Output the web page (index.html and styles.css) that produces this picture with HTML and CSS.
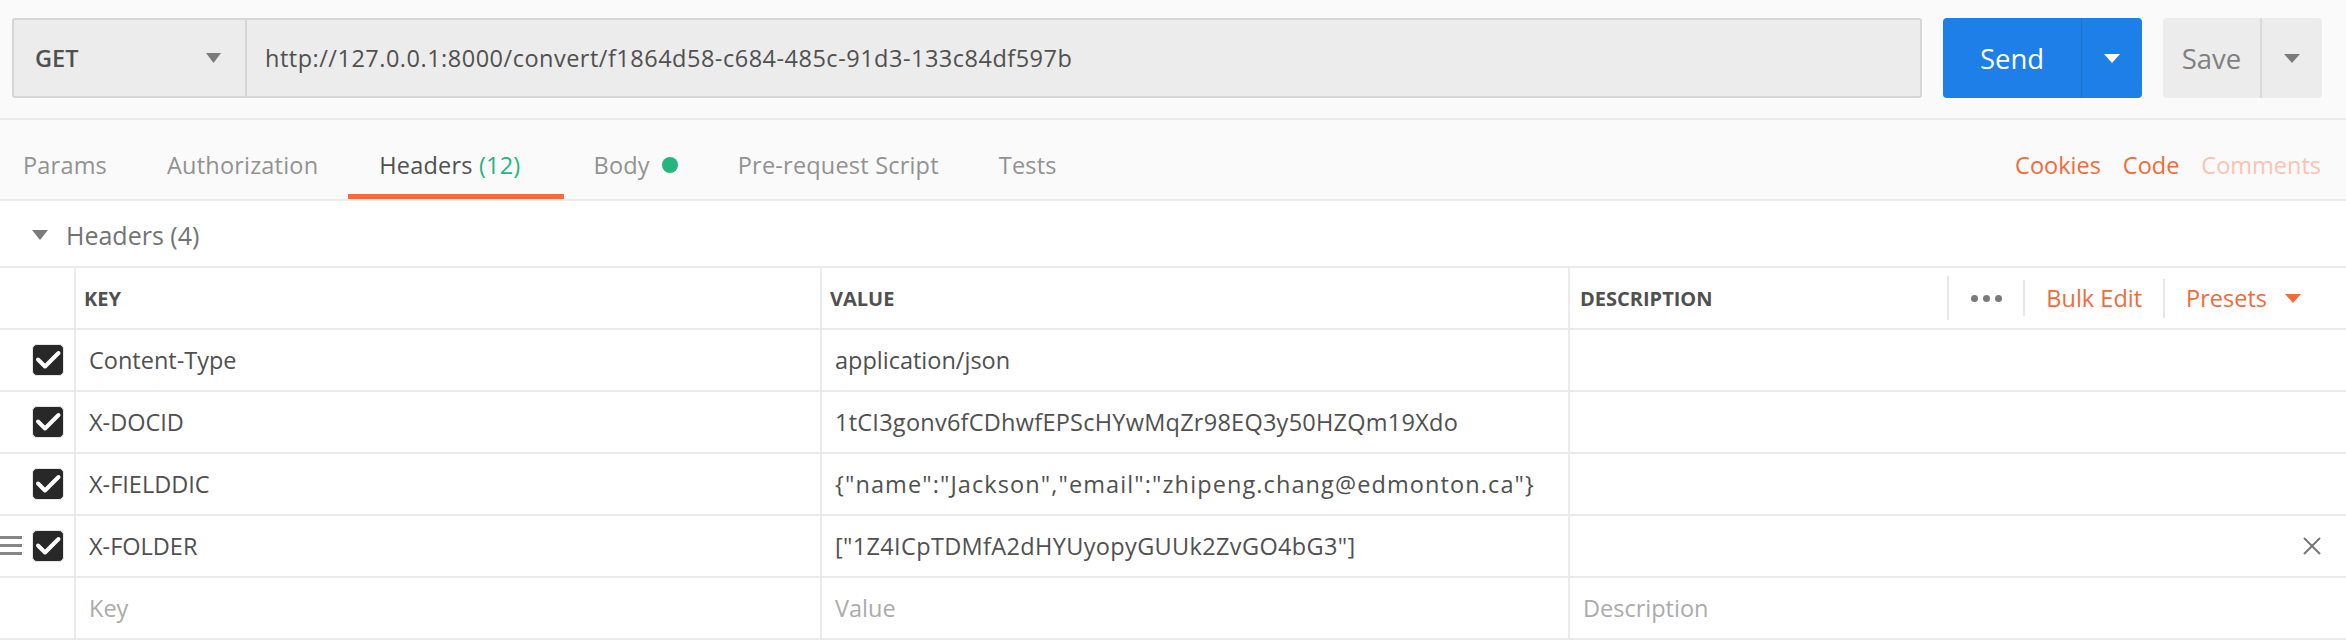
FILE: index.html
```html
<!DOCTYPE html>
<html>
<head>
<meta charset="utf-8">
<link rel="stylesheet" href="styles.css">
</head>
<body>
<div class="app">
  <div class="topbar">
    <div class="urlbox">
      <div class="method">
        <span class="method-label">GET</span>
        <svg class="caret" width="15" height="10" viewBox="0 0 15 10"><path d="M0 0H15L7.5 10Z" fill="#7b7b7b"/></svg>
      </div>
      <div class="url">http://127.0.0.1:8000/convert/f1864d58-c684-485c-91d3-133c84df597b</div>
    </div>
    <div class="send">
      <div class="send-main">Send</div>
      <div class="send-drop"><svg width="16" height="9" viewBox="0 0 16 9"><path d="M0 0H16L8 9Z" fill="#ffffff"/></svg></div>
    </div>
    <div class="save">
      <div class="save-main">Save</div>
      <div class="save-drop"><svg width="16" height="9" viewBox="0 0 16 9"><path d="M0 0H16L8 9Z" fill="#7b7b7b"/></svg></div>
    </div>
  </div>

  <div class="tabs">
    <div class="tab">Params</div>
    <div class="tab">Authorization</div>
    <div class="tab active">Headers&nbsp;<span class="count">(12)</span></div>
    <div class="tab">Body<span class="dot"></span></div>
    <div class="tab">Pre-request Script</div>
    <div class="tab">Tests</div>
    <div class="tab-actions">
      <span class="link">Cookies</span>
      <span class="link">Code</span>
      <span class="link faded">Comments</span>
    </div>
  </div>

  <div class="section-title">
    <svg class="collapse" width="16" height="10" viewBox="0 0 16 10"><path d="M0 0H16L8 10Z" fill="#7b7b7b"/></svg>
    <span>Headers (4)</span>
  </div>

  <div class="table">
    <div class="row head">
      <div class="cell"></div>
      <div class="cell">KEY</div>
      <div class="cell">VALUE</div>
      <div class="cell desc-head">
        <span>DESCRIPTION</span>
        <div class="tools">
          <span class="vsep tall"></span>
          <span class="dots"><i></i><i></i><i></i></span>
          <span class="vsep"></span>
          <span class="link">Bulk Edit</span>
          <span class="vsep mid"></span>
          <span class="link presets"><span>Presets</span><svg width="16" height="9" viewBox="0 0 16 9"><path d="M0 0H16L8 9Z" fill="#f26b3a"/></svg></span>
        </div>
      </div>
    </div>

    <div class="row">
      <div class="cell check-cell"><span class="checkbox"><svg width="30" height="30" viewBox="0 0 30 30"><path d="M5 14.5L12 21.5L25.5 8" fill="none" stroke="#fff" stroke-width="4" stroke-linecap="round" stroke-linejoin="round"/></svg></span></div>
      <div class="cell text">Content-Type</div>
      <div class="cell text">application/json</div>
      <div class="cell"></div>
    </div>

    <div class="row">
      <div class="cell check-cell"><span class="checkbox"><svg width="30" height="30" viewBox="0 0 30 30"><path d="M5 14.5L12 21.5L25.5 8" fill="none" stroke="#fff" stroke-width="4" stroke-linecap="round" stroke-linejoin="round"/></svg></span></div>
      <div class="cell text">X-DOCID</div>
      <div class="cell text value">1tCI3gonv6fCDhwfEPScHYwMqZr98EQ3y50HZQm19Xdo</div>
      <div class="cell"></div>
    </div>

    <div class="row">
      <div class="cell check-cell"><span class="checkbox"><svg width="30" height="30" viewBox="0 0 30 30"><path d="M5 14.5L12 21.5L25.5 8" fill="none" stroke="#fff" stroke-width="4" stroke-linecap="round" stroke-linejoin="round"/></svg></span></div>
      <div class="cell text">X-FIELDDIC</div>
      <div class="cell text value wide">{"name":"Jackson","email":"zhipeng.chang@edmonton.ca"}</div>
      <div class="cell"></div>
    </div>

    <div class="row">
      <div class="cell check-cell">
        <svg class="handle" width="22" height="19" viewBox="0 0 22 19"><rect x="0" y="0" width="22" height="3" fill="#868686"/><rect x="0" y="8" width="22" height="3" fill="#868686"/><rect x="0" y="16" width="22" height="3" fill="#868686"/></svg>
        <span class="checkbox"><svg width="30" height="30" viewBox="0 0 30 30"><path d="M5 14.5L12 21.5L25.5 8" fill="none" stroke="#fff" stroke-width="4" stroke-linecap="round" stroke-linejoin="round"/></svg></span>
      </div>
      <div class="cell text">X-FOLDER</div>
      <div class="cell text value mid">["1Z4ICpTDMfA2dHYUyopyGUUk2ZvGO4bG3"]</div>
      <div class="cell close-cell"><svg width="18" height="18" viewBox="0 0 18 18"><path d="M1 1L17 17M17 1L1 17" stroke="#777" stroke-width="2"/></svg></div>
    </div>

    <div class="row">
      <div class="cell"></div>
      <div class="cell text placeholder">Key</div>
      <div class="cell text placeholder">Value</div>
      <div class="cell text placeholder">Description</div>
    </div>
  </div>
</div>
</body>
</html>
```

FILE: styles.css
```css
* { box-sizing: border-box; }

body {
  margin: 0;
  width: 2346px;
  background: #ffffff;
  font-family: "Open Sans", "Liberation Sans", sans-serif;
  font-size: 23.5px;
  color: #505050;
}

/* ---------- top bar ---------- */
.topbar {
  display: flex;
  align-items: flex-start;
  gap: 21px;
  height: 120px;
  padding: 18px 24px 0 12px;
  background: #fafafa;
  border-bottom: 2px solid #ebebeb;
}

.urlbox {
  flex: 1;
  display: flex;
  height: 80px;
  background: #ececec;
  border: 2px solid #d6d6d6;
  border-radius: 3px;
}

.method {
  width: 233px;
  display: flex;
  align-items: center;
  justify-content: space-between;
  padding: 0 24px 0 21px;
  border-right: 2px solid #d6d6d6;
  font-weight: 600;
  color: #505050;
}

.url {
  display: flex;
  align-items: center;
  padding-left: 18px;
  letter-spacing: 0.5px;
  color: #505050;
}

.send {
  width: 199px;
  height: 80px;
  display: flex;
  background: #1e7fe9;
  border-radius: 4px;
  color: #ffffff;
  font-size: 27.5px;
}

.send-main {
  width: 139px;
  display: flex;
  align-items: center;
  justify-content: center;
  border-right: 1px solid #1a6fcf;
}

.send-drop, .save-drop {
  flex: 1;
  display: flex;
  align-items: center;
  justify-content: center;
}

.save {
  width: 159px;
  height: 80px;
  display: flex;
  background: #ececec;
  border-radius: 4px;
  color: #808080;
  font-size: 27.5px;
}

.save-main {
  width: 99px;
  display: flex;
  align-items: center;
  justify-content: center;
  border-right: 2px solid #dadada;
}

/* ---------- tabs ---------- */
.tabs {
  display: flex;
  height: 81px;
  padding: 0 25px 0 23px;
  background: #fafafa;
  border-bottom: 2px solid #ebebeb;
}

.tab {
  display: flex;
  align-items: center;
  padding: 16px 30px 0;
  border-bottom: 5px solid transparent;
  color: #929292;
  letter-spacing: 0.2px;
  white-space: nowrap;
}

.tab:first-child { padding-left: 0; }

.tab.active {
  padding-left: 31px;
  padding-right: 43px;
  color: #505050;
  border-bottom-color: #f26b3a;
}

.count { color: #26b47f; }

.dot {
  display: inline-block;
  width: 16px;
  height: 16px;
  margin-left: 12px;
  border-radius: 50%;
  background: #26b47f;
}

.tab-actions {
  margin-left: auto;
  display: flex;
  align-items: center;
  gap: 22px;
  padding: 16px 0 5px;
}

.link { color: #f26b3a; }
.link.faded { color: #f9c4b0; }

/* ---------- section title ---------- */
.section-title {
  display: flex;
  align-items: center;
  gap: 18px;
  height: 65px;
  padding: 2px 0 0 32px;
  font-size: 25px;
  color: #737373;
}

/* ---------- table ---------- */
.table { border-top: 2px solid #ebebeb; }

.row {
  display: grid;
  grid-template-columns: 76px 746px 748px 1fr;
  height: 62px;
  border-bottom: 2px solid #ebebeb;
}

.cell {
  position: relative;
  display: flex;
  align-items: center;
  padding-left: 12px;
  border-right: 2px solid #ebebeb;
  white-space: nowrap;
}

.cell:last-child { border-right: none; }

.head .cell {
  padding-left: 8px;
  font-size: 20px;
  font-weight: 700;
  color: #505050;
}

.head .cell.desc-head {
  justify-content: space-between;
  padding-left: 10px;
  padding-right: 45px;
}

.tools {
  display: flex;
  align-items: center;
  font-size: 23.5px;
  font-weight: 400;
}

.vsep {
  width: 2px;
  height: 36px;
  background: #e6e6e6;
}
.vsep.tall { height: 44px; }
.vsep.mid { height: 39px; }

.dots {
  display: flex;
  gap: 5px;
  padding: 0 21px 0 22px;
}

.dots i {
  display: block;
  width: 7px;
  height: 7px;
  border-radius: 50%;
  background: #7a7a7a;
}

.tools .link { padding: 0 21px; }

.tools .presets {
  display: flex;
  align-items: center;
  gap: 18px;
  padding-right: 0;
}

.check-cell { padding-left: 32px; }

.checkbox {
  display: flex;
  align-items: center;
  justify-content: center;
  width: 32px;
  height: 32px;
  background: #282828;
  border: 1px solid #e6e6e6;
  border-radius: 5px;
}

.handle {
  position: absolute;
  left: 0;
  top: 20px;
}

.text { padding-left: 13px; }

.value { letter-spacing: 0.25px; }
.value.wide { letter-spacing: 1.1px; }
.value.mid { letter-spacing: 0.35px; }

.placeholder { color: #ababab; }

.close-cell {
  justify-content: flex-end;
  padding-right: 25px;
}
```
